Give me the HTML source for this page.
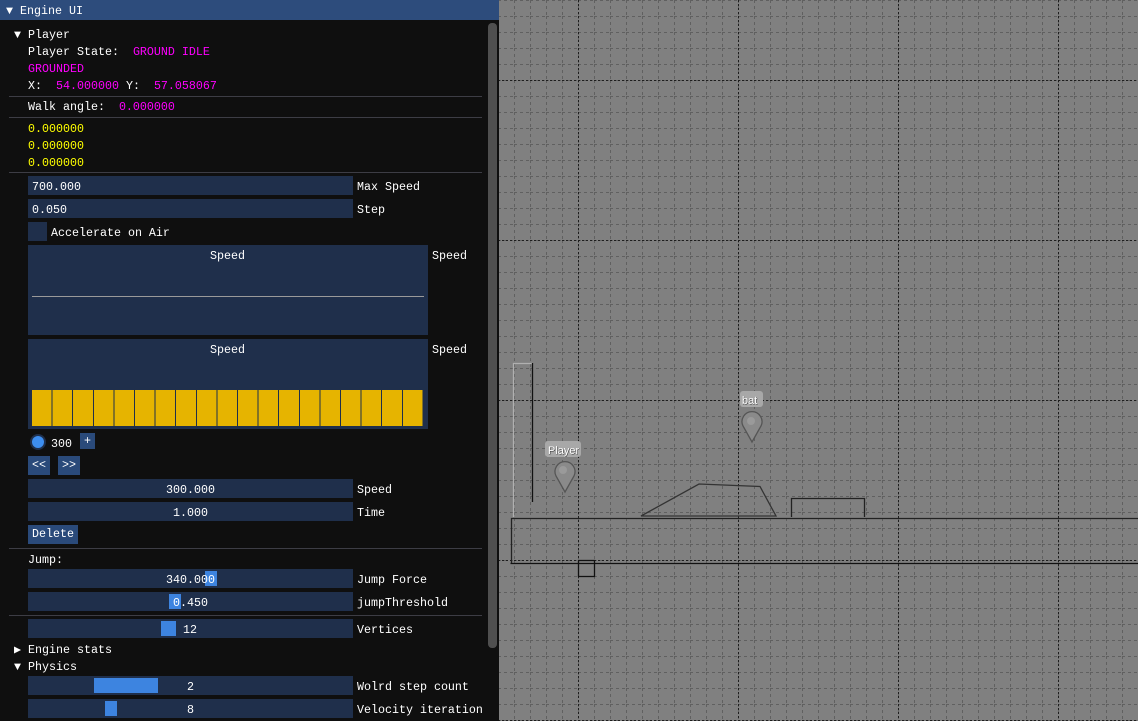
<!DOCTYPE html>
<html><head><meta charset="utf-8"><style>
*{margin:0;padding:0;box-sizing:border-box}
body{width:1138px;height:721px;overflow:hidden;background:#808080;position:relative;font-family:"Liberation Mono",monospace;font-size:11.67px;color:#fff}
.a{position:absolute;white-space:pre;line-height:14px;padding-top:1px}
.p{position:absolute;left:0;top:0;width:499px;height:721px;background:#0f0f0f}
.f{position:absolute;background:#1f2f4b;height:19px}
.s{position:absolute;left:9px;width:473px;height:1px;background:#3d3d45}
.m{color:#ff00ff}.y{color:#ffff00}
.g{position:absolute;background:#3d84e0}
.b{position:absolute;background:#2a4a7a;height:19px;text-align:center;line-height:19px}
</style></head><body>
<svg style="position:absolute;left:0;top:0" width="1138" height="721">
<defs>
<pattern id="mi" x="2" y="0" width="16" height="16" patternUnits="userSpaceOnUse">
<path d="M0.5 0V16M0 0.5H16" stroke="#606060" stroke-width="1" stroke-dasharray="3 3" fill="none"/>
</pattern>
<pattern id="ma" x="578" y="80" width="160" height="160" patternUnits="userSpaceOnUse">
<path d="M0.5 0V160M0 0.5H160" stroke="#1e1e1e" stroke-width="1" stroke-dasharray="2 2" fill="none"/>
</pattern>
</defs>
<rect width="1138" height="721" fill="#808080"/>
<rect width="1138" height="721" fill="url(#mi)"/>
<rect width="1138" height="721" fill="url(#ma)"/>
<g fill="none" stroke-width="1.3">
<path d="M513.5 517V363.5H532.5" stroke="#b0b0b0"/>
<path d="M532.5 363V502" stroke="#111"/>
<path d="M511.5 563V518.5H1138" stroke="#222"/>
<path d="M510.5 563.5H1138" stroke="#111"/>
<rect x="578.5" y="560.5" width="16" height="16" stroke="#111"/>
<path d="M641 516L699 484L760 486.5L776 516Z" stroke="#333"/>
<path d="M791.5 517V498.5H864.5V517" stroke="#222"/>
</g>
<rect x="545" y="441" width="36" height="16" rx="3" fill="#a8a8a8"/>
<text x="548.5" y="454.5" font-family="Liberation Sans" font-size="11" fill="#333">Player</text>
<text x="548" y="454" font-family="Liberation Sans" font-size="11" fill="#fff">Player</text>
<path d="M565 492L556 476A10 10 0 1 1 574 476Z" fill="#8a8a8a" stroke="#555" stroke-width="1.3"/>
<circle cx="563" cy="470" r="4" fill="#9a9a9a"/>
<rect x="740" y="391" width="23" height="16" rx="3" fill="#a8a8a8"/>
<text x="742.5" y="404.5" font-family="Liberation Sans" font-size="11" fill="#333">bat</text>
<text x="742" y="404" font-family="Liberation Sans" font-size="11" fill="#fff">bat</text>
<path d="M752 442L743 426A10 10 0 1 1 761 426Z" fill="#8a8a8a" stroke="#555" stroke-width="1.3"/>
<circle cx="751" cy="421" r="4" fill="#9a9a9a"/>
</svg>
<div class="p">
<div style="position:absolute;left:0;top:0;width:499px;height:20px;background:#2d4c7c"></div>
<div class="a" style="left:6px;top:3px">▼ Engine UI</div>
<div style="position:absolute;left:488px;top:23px;width:9px;height:625px;background:#4f4f4f;border-radius:4px"></div>
<div class="a" style="left:14px;top:27px">▼ Player</div>
<div class="a" style="left:28px;top:44px">Player State:  <span class="m">GROUND IDLE</span></div>
<div class="a m" style="left:28px;top:61px">GROUNDED</div>
<div class="a" style="left:28px;top:78px">X:  <span class="m">54.000000</span> Y:  <span class="m">57.058067</span></div>
<div class="s" style="top:96px"></div>
<div class="a" style="left:28px;top:99px">Walk angle:  <span class="m">0.000000</span></div>
<div class="s" style="top:117px"></div>
<div class="a y" style="left:28px;top:121px">0.000000</div>
<div class="a y" style="left:28px;top:138px">0.000000</div>
<div class="a y" style="left:28px;top:155px">0.000000</div>
<div class="s" style="top:172px"></div>
<div class="f" style="left:28px;top:176px;width:325px"></div><div class="a" style="left:32px;top:179px">700.000</div><div class="a" style="left:357px;top:179px">Max Speed</div>
<div class="f" style="left:28px;top:199px;width:325px"></div><div class="a" style="left:32px;top:202px">0.050</div><div class="a" style="left:357px;top:202px">Step</div>
<div class="f" style="left:28px;top:222px;width:19px"></div><div class="a" style="left:51px;top:225px">Accelerate on Air</div>
<div class="f" style="left:28px;top:245px;width:400px;height:90px"></div>
<div class="a" style="left:210px;top:248px">Speed</div><div class="a" style="left:432px;top:248px">Speed</div>
<div style="position:absolute;left:32px;top:296px;width:392px;height:1px;background:#9a9a9a"></div>
<div class="f" style="left:28px;top:339px;width:400px;height:90px"></div>
<div class="a" style="left:210px;top:342px">Speed</div><div class="a" style="left:432px;top:342px">Speed</div>
<div style="position:absolute;left:32px;top:390px;width:391px;height:36px;background:repeating-linear-gradient(90deg,#e6b400 0 19.6px,#1f2f4b 19.6px 20.6px)"></div>
<div style="position:absolute;left:30px;top:434px;width:16px;height:16px;border-radius:50%;background:#1f2f4b"></div>
<div style="position:absolute;left:32px;top:436px;width:12px;height:12px;border-radius:50%;background:#3d8ef0"></div>
<div class="a" style="left:51px;top:436px">300</div>
<div class="b" style="left:80px;top:433px;width:15px;height:16px;line-height:16px">+</div>
<div class="b" style="left:28px;top:456px;width:22px">&lt;&lt;</div>
<div class="b" style="left:58px;top:456px;width:22px">&gt;&gt;</div>
<div class="f" style="left:28px;top:479px;width:325px"></div><div class="a" style="left:166px;top:482px">300.000</div><div class="a" style="left:357px;top:482px">Speed</div>
<div class="f" style="left:28px;top:502px;width:325px"></div><div class="a" style="left:173px;top:505px">1.000</div><div class="a" style="left:357px;top:505px">Time</div>
<div class="b" style="left:28px;top:525px;width:50px">Delete</div>
<div class="s" style="top:548px"></div>
<div class="a" style="left:28px;top:552px">Jump:</div>
<div class="f" style="left:28px;top:569px;width:325px"></div><div class="g" style="left:205px;top:571px;width:12px;height:15px"></div><div class="a" style="left:166px;top:572px">340.000</div><div class="a" style="left:357px;top:572px">Jump Force</div>
<div class="f" style="left:28px;top:592px;width:325px"></div><div class="g" style="left:169px;top:594px;width:12px;height:15px"></div><div class="a" style="left:173px;top:595px">0.450</div><div class="a" style="left:357px;top:595px">jumpThreshold</div>
<div class="s" style="top:615px"></div>
<div class="f" style="left:28px;top:619px;width:325px"></div><div class="g" style="left:161px;top:621px;width:15px;height:15px"></div><div class="a" style="left:183px;top:622px">12</div><div class="a" style="left:357px;top:622px">Vertices</div>
<div class="a" style="left:14px;top:642px">▶ Engine stats</div>
<div class="a" style="left:14px;top:659px">▼ Physics</div>
<div class="f" style="left:28px;top:676px;width:325px"></div><div class="g" style="left:94px;top:678px;width:64px;height:15px"></div><div class="a" style="left:187px;top:679px">2</div><div class="a" style="left:357px;top:679px">Wolrd step count</div>
<div class="f" style="left:28px;top:699px;width:325px"></div><div class="g" style="left:105px;top:701px;width:12px;height:15px"></div><div class="a" style="left:187px;top:702px">8</div><div class="a" style="left:357px;top:702px">Velocity iteration</div>
</div>
</body></html>
